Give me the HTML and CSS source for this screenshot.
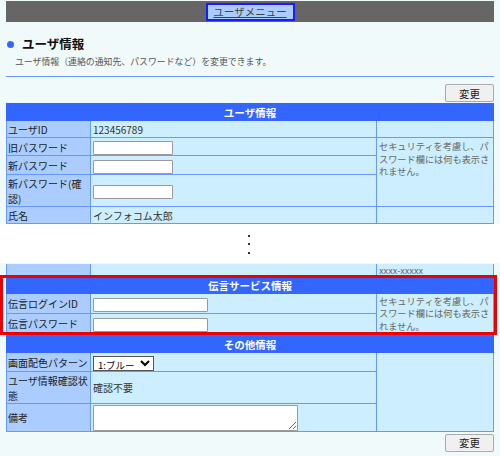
FILE: index.html
```
<!DOCTYPE html>
<html lang="ja">
<head>
<meta charset="UTF-8">
<title>ユーザ情報</title>
<link rel="stylesheet" href="styles.css">
</head>
<body>

<div class="page">
    <div class="menubar">
        <a class="menu-button" href="#">ユーザメニュー</a>
    </div>

    <div class="title">
        <h2><span class="dot"></span>ユーザ情報</h2>
        <p class="lead">ユーザ情報（連絡の通知先、パスワードなど）を変更できます。</p>
    </div>

    <div class="btn-row">
        <button class="btn">変更</button>
    </div>

    <table class="form">
        <colgroup><col class="c-label"><col class="c-value"><col class="c-note"></colgroup>
        <tr><th colspan="3">ユーザ情報</th></tr>
        <tr><td class="label">ユーザID</td><td>123456789</td><td class="note"></td></tr>
        <tr>
            <td class="label">旧パスワード</td>
            <td><input type="password" class="txt"></td>
            <td class="note top" rowspan="3">セキュリティを考慮し、パスワード欄には何も表示されません。</td>
        </tr>
        <tr><td class="label">新パスワード</td><td><input type="password" class="txt"></td></tr>
        <tr><td class="label">新パスワード(確認)</td><td><input type="password" class="txt"></td></tr>
        <tr><td class="label">氏名</td><td>インフォコム太郎</td><td class="note"></td></tr>
    </table>
</div>

<!-- 省略部分 -->
<div class="skip">
    <span></span><span></span><span></span>
</div>

<div class="page">
    <div class="cut">
        <table class="form">
            <colgroup><col class="c-label"><col class="c-value"><col class="c-note"></colgroup>
            <tr><td class="label"></td><td></td><td class="note">xxxx-xxxxx</td></tr>
        </table>
    </div>

    <div class="highlight">
        <table class="form">
            <colgroup><col class="c-label"><col class="c-value"><col class="c-note"></colgroup>
            <tr><th colspan="3">伝言サービス情報</th></tr>
            <tr>
                <td class="label">伝言ログインID</td>
                <td><input type="text" class="txt wide"></td>
                <td class="note" rowspan="2">セキュリティを考慮し、パスワード欄には何も表示されません。</td>
            </tr>
            <tr><td class="label">伝言パスワード</td><td><input type="password" class="txt wide"></td></tr>
        </table>
    </div>

    <table class="form other">
        <colgroup><col class="c-label"><col class="c-value"><col class="c-note"></colgroup>
        <tr><th colspan="3">その他情報</th></tr>
        <tr>
            <td class="label">画面配色パターン</td>
            <td>
                <select class="sel">
                    <option>1:ブルー</option>
                    <option>2:グリーン</option>
                </select>
            </td>
            <td class="note" rowspan="3"></td>
        </tr>
        <tr><td class="label">ユーザ情報確認状態</td><td>確認不要</td></tr>
        <tr><td class="label">備考</td><td><textarea class="memo"></textarea></td></tr>
    </table>

    <div class="btn-row bottom">
        <button class="btn">変更</button>
    </div>
</div>

</body>
</html>
```

FILE: styles.css
```
body, html {
    margin: 0;
    padding: 0;
}

body {
    background-color: #ffffff;
    font-family: "Noto Sans CJK JP", "Noto Sans", sans-serif;
    color: #333;
}

.page {
    background-color: #f0fafa;
    padding: 1px 6px 0 6px;
}

.menubar {
    background-color: #666666;
    height: 21px;
    display: flex;
    justify-content: center;
    align-items: center;
}

.menu-button {
    display: block;
    width: 89px;
    height: 18px;
    box-sizing: border-box;
    background-color: #aaccff;
    border: 2px solid #1a1aff;
    color: #444;
    font-size: 10.5px;
    line-height: 14px;
    text-align: center;
    text-decoration: underline;
}

.title {
    padding-top: 12px;
    border-bottom: 1px solid #6699ff;
}

.title h2 {
    margin: 0;
    font-size: 12.5px;
    line-height: 20px;
    font-weight: bold;
    color: #111;
    display: flex;
    align-items: center;
}

.dot {
    width: 7px;
    height: 7px;
    border-radius: 50%;
    background-color: #3366ff;
    margin: 0 8px 0 1px;
}

.lead {
    margin: 1px 0 7px 9px;
    font-size: 8.9px;
    line-height: 14px;
    color: #555;
}

.btn-row {
    display: flex;
    justify-content: flex-end;
    padding: 7px 0 1px 0;
}

.btn-row.bottom {
    padding: 2px 0 4px 0;
}

.btn {
    width: 49px;
    height: 18px;
    padding: 0;
    font-family: inherit;
    font-size: 10.5px;
    color: #222;
    background-color: #f0f0f0;
    border: 1px solid #aaa;
    border-radius: 2px;
}

/* 入力フォーム */
.form {
    width: 100%;
    border-collapse: collapse;
    table-layout: fixed;
    font-size: 10px;
}

.c-label { width: 84px; }
.c-value { width: 286px; }

.form th {
    background-color: #3366ff;
    color: #fff;
    font-weight: bold;
    font-size: 10.5px;
    line-height: 15px;
    padding: 1px 2px 0 2px;
    border: 1px solid #3366ff;
    text-align: center;
}

.form td {
    background-color: #cceeff;
    border: 1px solid #6699ff;
    line-height: 15px;
    padding: 1px 2px 0 2px;
    color: #333;
}

.form td.label {
    background-color: #aaccff;
    padding-left: 1px;
    padding-right: 0;
    color: #222;
}

.form td.note {
    font-size: 9.2px;
    line-height: 12.5px;
    color: #666;
    padding: 1px 2px;
}

.form td.top {
    vertical-align: top;
    padding-top: 2px;
}

.form .txt {
    width: 80px;
    height: 14px;
    box-sizing: border-box;
    margin: 0;
    border: 1px solid #999;
    border-radius: 1px;
    background-color: #fff;
    vertical-align: middle;
}

.form .txt.wide {
    width: 115px;
}

.sel {
    width: 61px;
    height: 15px;
    padding: 0;
    font-family: inherit;
    font-size: 9.5px;
    border: 1px solid #555;
    border-radius: 0;
    background-color: #fff;
    vertical-align: middle;
}

.memo {
    display: block;
    width: 205px;
    height: 26px;
    box-sizing: border-box;
    margin: 0;
    border: 1px solid #999;
    border-radius: 1px;
    background-color: #fff;
}

/* 途中から表示される行 */
.cut {
    height: 12px;
    overflow: hidden;
    display: flex;
    flex-direction: column;
    justify-content: flex-end;
}

.cut table {
    flex: none;
}

.cut td.note {
    vertical-align: bottom;
    line-height: 10px;
    padding-bottom: 0;
}

.highlight {
    position: relative;
    margin-bottom: 1px;
}

.highlight::after {
    content: "";
    position: absolute;
    left: -6px;
    right: -3px;
    top: -1px;
    bottom: -1px;
    border: 3px solid #ee0000;
    pointer-events: none;
}

/* 省略記号 */
.skip {
    height: 39px;
    display: flex;
    flex-direction: column;
    align-items: center;
    padding-top: 11px;
    box-sizing: border-box;
    gap: 6.5px;
}

.skip span {
    width: 2px;
    height: 2px;
    background-color: #333;
    margin-left: -2px;
}
```
